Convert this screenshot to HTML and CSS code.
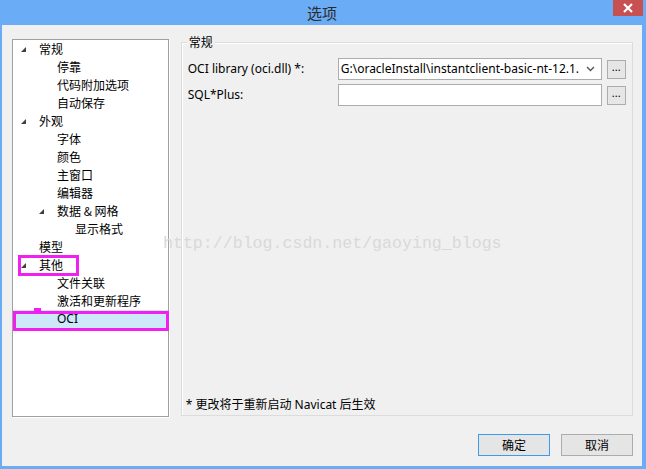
FILE: index.html
```html
<!DOCTYPE html>
<html lang="zh">
<head>
<meta charset="utf-8">
<title>选项</title>
<link rel="stylesheet" href="styles.css">
</head>
<body>
<div class="window">
  <div class="titlebar">
    <span class="title">选项</span>
    <div class="close"><svg width="12" height="10" viewBox="0 0 12 10"><path d="M2 1 L10 9 M10 1 L2 9" stroke="#fff" stroke-width="2.2"/></svg></div>
  </div>
  <div class="client">
    <div class="main">
      <div class="tree">
        <div class="row l0"><span class="tri"></span>常规</div>
        <div class="row l1">停靠</div>
        <div class="row l1">代码附加选项</div>
        <div class="row l1">自动保存</div>
        <div class="row l0"><span class="tri"></span>外观</div>
        <div class="row l1">字体</div>
        <div class="row l1">颜色</div>
        <div class="row l1">主窗口</div>
        <div class="row l1">编辑器</div>
        <div class="row l1"><span class="tri"></span>数据 &amp; 网格</div>
        <div class="row l2">显示格式</div>
        <div class="row l0">模型</div>
        <div class="row l0"><span class="tri"></span>其他</div>
        <div class="row l1">文件关联</div>
        <div class="row l1">激活和更新程序</div>
        <div class="row l1 selected">OCI</div>
      </div>
      <div class="group">
        <span class="legend">常规</span>
        <div class="fields">
          <div class="field">
            <span class="label">OCI library (oci.dll) *:</span>
            <div class="combo"><span class="combo-text">G:\oracleInstall\instantclient-basic-nt-12.1.</span><svg class="chev" width="9" height="6" viewBox="0 0 9 6"><path d="M1 1 L4.5 4.5 L8 1" fill="none" stroke="#555" stroke-width="1.4"/></svg></div>
            <div class="dots">...</div>
          </div>
          <div class="field">
            <span class="label">SQL*Plus:</span>
            <div class="input"></div>
            <div class="dots">...</div>
          </div>
        </div>
        <div class="note">* 更改将于重新启动 Navicat 后生效</div>
      </div>
    </div>
    <div class="buttons">
      <div class="btn default">确定</div>
      <div class="btn">取消</div>
    </div>
  </div>
  <div class="watermark">http://blog.csdn.net/gaoying_blogs</div>
  <div class="mark mark-other"></div>
  <div class="mark mark-oci"></div>
  <div class="mark-dot"></div>
</div>
</body>
</html>
```

FILE: styles.css
```css
* { box-sizing: border-box; }
html, body { margin: 0; padding: 0; }
body {
  font-family: "Noto Sans", "Noto Sans CJK SC", sans-serif;
  font-size: 12px;
  color: #000;
}
.window {
  position: relative;
  width: 646px;
  height: 469px;
  background: #6aacf5;
  display: flex;
  flex-direction: column;
  overflow: hidden;
}
.titlebar {
  height: 25px;
  flex: none;
  display: flex;
  justify-content: center;
  align-items: center;
  position: relative;
}
.title {
  font-family: "Noto Sans CJK SC", sans-serif;
  font-size: 15px;
  color: #2b2b2b;
  margin-left: -2px;
  line-height: 25px;
}
.close {
  position: absolute;
  top: 0;
  right: 3px;
  width: 30px;
  height: 16px;
  background: #c75050;
  display: flex;
  align-items: center;
  justify-content: center;
}
.client {
  flex: 1;
  margin: 0 4px 3px 2px;
  background: #f0f0f0;
  padding: 14px 9px 0 10px;
  display: flex;
  flex-direction: column;
}
.main {
  display: flex;
  gap: 12px;
  height: 378px;
}
.tree {
  width: 157px;
  height: 378px;
  background: #fff;
  border: 1px solid #a0a0a0;
  box-shadow: 1px 1px 0 #fff;
  padding-top: 0;
}
.row {
  height: 18px;
  line-height: 18px;
  position: relative;
  white-space: nowrap;
  font-family: "Noto Sans CJK SC", sans-serif;
}
.l0 { padding-left: 26px; }
.l1 { padding-left: 44px; }
.l2 { padding-left: 62px; }
.tri {
  position: absolute;
  top: 7px;
  width: 0;
  height: 0;
  border-bottom: 5px solid #3f3f3f;
  border-left: 5px solid transparent;
}
.l0 .tri { left: 8px; }
.l1 .tri { left: 26px; }
.row.selected {
  background: #cde8f8;
  font-family: "Noto Sans", sans-serif;
}
.group {
  position: relative;
  margin-top: 3px;
  width: 453px;
  height: 374px;
  border: 1px solid #dcdcdc;
  box-shadow: inset 1px 1px 0 #fff;
  display: flex;
  flex-direction: column;
  padding: 15px 6px 0 6px;
}
.legend {
  position: absolute;
  top: -9px;
  left: 5px;
  padding: 0 2px;
  background: #f0f0f0;
  line-height: 16px;
  font-family: "Noto Sans CJK SC", sans-serif;
}
.fields {
  display: flex;
  flex-direction: column;
  gap: 4px;
}
.field {
  display: flex;
  align-items: center;
  height: 22px;
}
.label {
  flex: none;
  width: 150px;
  line-height: 22px;
  white-space: nowrap;
}
.combo, .input {
  flex: none;
  width: 264px;
  height: 22px;
  background: #fff;
  border: 1px solid #acacac;
}
.combo {
  display: flex;
  align-items: center;
  padding: 0 6px 0 2px;
  justify-content: space-between;
}
.combo-text {
  white-space: nowrap;
  overflow: hidden;
  line-height: 20px;
}
.chev { flex: none; margin-left: 2px; }
.dots {
  flex: none;
  width: 19px;
  height: 19px;
  margin-left: 5px;
  border: 1px solid #acacac;
  background: #e6e6e6;
  text-align: center;
  line-height: 12px;
  font-size: 11px;
}
.note {
  margin-top: auto;
  margin-bottom: 1px;
  line-height: 18px;
  font-family: "Noto Sans", "Noto Sans CJK SC", sans-serif;
  margin-left: -2px;
}
.buttons {
  display: flex;
  justify-content: flex-end;
  gap: 11px;
  margin-top: 17px;
}
.btn {
  width: 72px;
  height: 22px;
  border: 1px solid #acacac;
  background: #e5e5e5;
  text-align: center;
  line-height: 20px;
  font-family: "Noto Sans CJK SC", sans-serif;
}
.btn.default {
  border-color: #3c9bea;
}
.watermark {
  position: absolute;
  left: 163px;
  top: 234px;
  font-family: "Liberation Mono", monospace;
  font-size: 16.6px;
  line-height: 20px;
  color: #d9d9d9;
  white-space: nowrap;
  pointer-events: none;
}
.mark {
  position: absolute;
  border: 3px solid #f020f0;
}
.mark-other { left: 18px; top: 255px; width: 61px; height: 21px; }
.mark-oci { left: 13px; top: 311px; width: 156px; height: 20px; }
.mark-dot {
  position: absolute;
  left: 34px;
  top: 308px;
  width: 7px;
  height: 4px;
  background: #f020f0;
}
```
